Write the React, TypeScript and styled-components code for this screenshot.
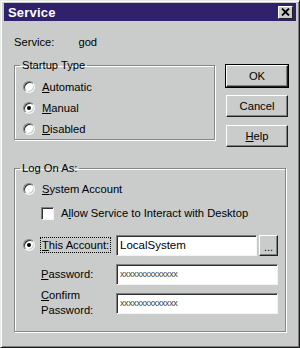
import styled, { createGlobalStyle, css } from 'styled-components';

const Global = createGlobalStyle`
  html, body { margin: 0; padding: 0; background: #c9cccb; }
  body { font-family: "Liberation Sans", Arial, sans-serif; font-size: 11.2px; color: #000; }
`;

const Window = styled.div`
  width: 300px;
  height: 348px;
  box-sizing: border-box;
  background: #c9cccb;
  border: 1px solid #e8eaea;
  border-right-color: #1a1a1a;
  border-bottom-color: #1a1a1a;
  box-shadow: inset 1px 1px 0 #fff, inset -1px -1px 0 #808080;
  padding: 2px 3px 0 3px;
  display: flex;
  flex-direction: column;
`;

const TitleBar = styled.div`
  height: 18px;
  background: #2f216b;
  display: flex;
  align-items: center;
  justify-content: space-between;
  padding: 0 3px 0 4px;
`;

const Title = styled.span`
  color: #fff;
  font-weight: bold;
  font-size: 13px;
  letter-spacing: 0.2px;
`;

const CloseBox = styled.div`
  width: 15px;
  height: 13px;
  box-sizing: border-box;
  background: #c9cccb;
  border: 1px solid #fff;
  border-right-color: #202020;
  border-bottom-color: #202020;
  display: flex;
  align-items: center;
  justify-content: center;
`;

const Body = styled.div`
  padding: 13px 10px 0 10px;
  display: flex;
  flex-direction: column;
`;

const ServiceRow = styled.div`
  display: flex;
  height: 16px;
  align-items: center;
`;

const ServiceName = styled.span`
  margin-left: 24px;
`;

const Top = styled.div`
  margin-top: 9px;
  display: grid;
  grid-template-columns: 201px 1fr;
  column-gap: 11px;
  align-items: start;
`;

const Group = styled.fieldset<{ $h: number }>`
  margin: 0;
  padding: 0;
  height: ${p => p.$h}px;
  box-sizing: border-box;
  border: 1px solid #868888;
  box-shadow: inset 1px 1px 0 #fff, 1px 1px 0 #fff;
`;

const Legend = styled.legend`
  padding: 0 2px;
  margin-left: 5px;
  line-height: 12px;
`;

const GroupInner = styled.div<{ $pad: string }>`
  padding: ${p => p.$pad};
  display: flex;
  flex-direction: column;
`;

const OptionRow = styled.label<{ $h?: number; $indent?: number }>`
  display: flex;
  align-items: center;
  height: ${p => p.$h ?? 21}px;
  padding-left: ${p => p.$indent ?? 0}px;
  gap: 7px;
  white-space: nowrap;
`;

const Radio = styled.span<{ $on?: boolean }>`
  width: 12px;
  height: 12px;
  box-sizing: border-box;
  border-radius: 50%;
  background: #fff;
  border: 1px solid;
  border-color: #808080 #f4f4f4 #f4f4f4 #808080;
  box-shadow: inset 1px 1px 0 #303030, inset -1px -1px 0 #c9cccb;
  display: flex;
  align-items: center;
  justify-content: center;
  flex-shrink: 0;
  ${p => p.$on && css`
    &::after {
      content: '';
      width: 4px;
      height: 4px;
      border-radius: 50%;
      background: #000;
    }
  `}
`;

const Check = styled.span`
  width: 13px;
  height: 13px;
  box-sizing: border-box;
  background: #fff;
  border: 1px solid;
  border-color: #808080 #f4f4f4 #f4f4f4 #808080;
  box-shadow: inset 1px 1px 0 #303030;
  flex-shrink: 0;
`;

const U = styled.span`
  text-decoration: underline;
  text-underline-offset: 1px;
`;

const Focus = styled.span`
  outline: 1px dotted #000;
  padding: 1px 1px;
`;

const Buttons = styled.div`
  display: flex;
  flex-direction: column;
  gap: 8px;
  padding-top: 6px;
  width: 62px;
`;

const Button = styled.div<{ $default?: boolean }>`
  height: 22px;
  box-sizing: border-box;
  display: flex;
  align-items: center;
  justify-content: center;
  border: 1px solid;
  border-color: #fff #202020 #202020 #fff;
  box-shadow: inset -1px -1px 0 #808080;
  ${p => p.$default && css`
    outline: 1px solid #000;
  `}
`;

const Bottom = styled.div`
  margin-top: 15px;
`;

const FieldRow = styled.div<{ $h: number }>`
  display: grid;
  grid-template-columns: 93px 1fr;
  align-items: center;
  height: ${p => p.$h}px;
`;

const FieldLabel = styled.span`
  line-height: 15px;
  padding-left: 18px;
`;

const Input = styled.div<{ $small?: boolean }>`
  height: 21px;
  box-sizing: border-box;
  background: #fff;
  border: 1px solid;
  border-color: #808080 #f4f4f4 #f4f4f4 #808080;
  box-shadow: inset 1px 1px 0 #303030;
  display: flex;
  align-items: center;
  padding-left: 3px;
  font-size: ${p => (p.$small ? 9 : 11.5)}px;
  color: ${p => (p.$small ? '#444' : '#000')};
  letter-spacing: ${p => (p.$small ? '-0.4px' : '0')};
`;

const InputPair = styled.div`
  display: flex;
  gap: 2px;
`;

const Grow = styled.div`
  flex: 1;
`;

const SmallButton = styled.div`
  width: 19px;
  height: 21px;
  box-sizing: border-box;
  border: 1px solid;
  border-color: #fff #202020 #202020 #fff;
  box-shadow: inset -1px -1px 0 #808080;
  display: flex;
  align-items: flex-end;
  justify-content: center;
  padding-bottom: 4px;
  font-size: 11px;
  line-height: 8px;
`;

const mask = 'xxxxxxxxxxxxxx';

export default function App() {
  return (
    <>
      <Global />
      <Window>
        <TitleBar>
          <Title>Service</Title>
          <CloseBox>
            <svg width="9" height="8" viewBox="0 0 9 8">
              <path d="M1 0.5 L8 7.5 M8 0.5 L1 7.5" stroke="#000" strokeWidth="1.8" />
            </svg>
          </CloseBox>
        </TitleBar>
        <Body>
          <ServiceRow>
            <span>Service:</span>
            <ServiceName>god</ServiceName>
          </ServiceRow>
          <Top>
            <Group $h={81}>
              <Legend>Startup Type</Legend>
              <GroupInner $pad="5px 0 0 8px">
                <OptionRow>
                  <Radio />
                  <span><U>A</U>utomatic</span>
                </OptionRow>
                <OptionRow>
                  <Radio $on />
                  <span><U>M</U>anual</span>
                </OptionRow>
                <OptionRow>
                  <Radio />
                  <span><U>D</U>isabled</span>
                </OptionRow>
              </GroupInner>
            </Group>
            <Buttons>
              <Button $default>OK</Button>
              <Button>Cancel</Button>
              <Button><span><U>H</U>elp</span></Button>
            </Buttons>
          </Top>
          <Bottom>
            <Group $h={170}>
              <Legend>Log On As:</Legend>
              <GroupInner $pad="5px 7px 0 8px">
                <OptionRow $h={20}>
                  <Radio />
                  <span><U>S</U>ystem Account</span>
                </OptionRow>
                <OptionRow $h={28} $indent={18}>
                  <Check />
                  <span>A<U>l</U>low Service to Interact with Desktop</span>
                </OptionRow>
                <FieldRow $h={36}>
                  <OptionRow style={{ gap: 6 }}>
                    <Radio $on />
                    <Focus><U>T</U>his Account:</Focus>
                  </OptionRow>
                  <InputPair>
                    <Grow>
                      <Input>LocalSystem</Input>
                    </Grow>
                    <SmallButton>...</SmallButton>
                  </InputPair>
                </FieldRow>
                <FieldRow $h={22}>
                  <FieldLabel><U>P</U>assword:</FieldLabel>
                  <Input $small>{mask}</Input>
                </FieldRow>
                <FieldRow $h={36}>
                  <FieldLabel>
                    <U>C</U>onfirm<br />Password:
                  </FieldLabel>
                  <Input $small>{mask}</Input>
                </FieldRow>
              </GroupInner>
            </Group>
          </Bottom>
        </Body>
      </Window>
    </>
  );
}
